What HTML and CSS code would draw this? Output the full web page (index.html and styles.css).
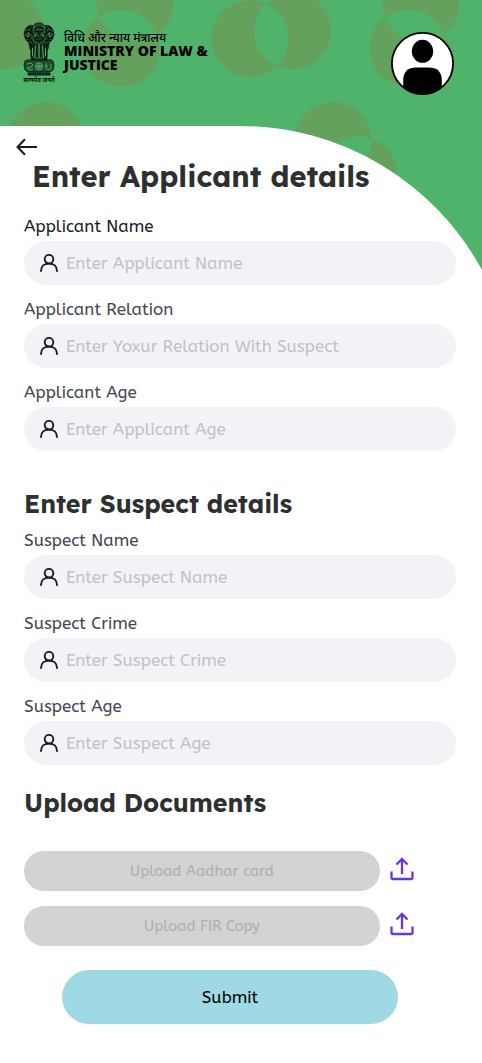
FILE: index.html
```html
<!DOCTYPE html>
<html lang="en">
<head>
<meta charset="utf-8">
<meta name="viewport" content="width=device-width, initial-scale=1">
<title>Enter Applicant details</title>
<link rel="stylesheet" href="styles.css">
</head>
<body>
<svg class="symbols" aria-hidden="true">
  <symbol id="person" viewBox="0 0 18 18"><g fill="none" stroke="currentColor" stroke-width="1.9" stroke-linecap="round"><circle cx="9" cy="5.200" r="4.300"/><path d="M1 17C1 12.200 4.300 9.600 9 9.600s8 2.600 8 7.400"/></g></symbol>
  <symbol id="upload" viewBox="0 0 24 24"><g fill="none" stroke="currentColor" stroke-width="2.300"><path d="M12 17V2M6.500 7.500L12 2l5.500 5.500M1.500 14.500v6q0 1.500 1.500 1.500h18q1.500 0 1.500-1.500v-6"/></g></symbol>
</svg>
<div class="page">
  <svg class="backdrop" viewBox="0 0 482 270" preserveAspectRatio="xMaxYMin slice" aria-hidden="true">
    <rect width="482" height="270" fill="#50b36c"/>
    <path fill="#64a15d" fill-rule="evenodd" d="
      M-33.500 31a38.500 38.500 0 1 0 77 0a38.500 38.500 0 1 0-77 0
      M96.500 3a38.500 38.500 0 1 0 77 0a38.500 38.500 0 1 0-77 0
      M82.500 48.500a38.500 38.500 0 1 0 77 0a38.500 38.500 0 1 0-77 0
      M211.500 38.500a38.500 38.500 0 1 0 77 0a38.500 38.500 0 1 0-77 0
      M254 31a38.500 38.500 0 1 0 77 0a38.500 38.500 0 1 0-77 0
      M382.500 3a38.500 38.500 0 1 0 77 0a38.500 38.500 0 1 0-77 0
      M369.500 48a38.500 38.500 0 1 0 77 0a38.500 38.500 0 1 0-77 0
      M7 140.500a38.500 38.500 0 1 0 77 0a38.500 38.500 0 1 0-77 0
      M294.500 140.500a38.500 38.500 0 1 0 77 0a38.500 38.500 0 1 0-77 0
      M320 174.500a38.500 38.500 0 1 0 77 0a38.500 38.500 0 1 0-77 0"/>
    <path fill="#fff" d="M0 126H240A275 275 0 0 1 482 270H0Z"/>
  </svg>
  <header class="header">
    <div class="brand">
      <svg class="emblem" viewBox="0 0 34 62" role="img" aria-label="State Emblem of India">
        <g fill="#0b2416" fill-opacity=".72" stroke="#06150c">
          <path stroke-width=".8" d="M12 4Q12 1 17 1t5 3q4-2 7 1l2 3 1 5-2 5-3 3-1 6-2 1 1 10H9l1-10-2-1-1-6-3-3-2-5 1-5 2-3q3-3 7-1Z"/>
          <path stroke-width=".8" d="M3 39q2-2 5-1h18q3-1 5 1l1 4-1 5-3 2H6l-3-2-1-5Z"/>
          <path stroke-width="1" d="M6 51h22v2H6z"/>
        </g>
        <g fill="none" stroke="#030a06" stroke-width="1.100">
          <path d="M11 5q-3 4 0 8l3 5q3 2 6 0l3-5q3-4 0-8M12 7q5-4 10 0M13 9l3 1M21 9l-3 1M17 9v5M14 15q3 2 6 0M15 18l2 2 2-2"/>
          <path d="M4 7l4-2 2 3M2 11l5-2 2 3M3 15l4 2 2-3M5 19l4-1 2 3M7 21l4 3M30 7l-4-2-2 3M32 11l-5-2-2 3M31 15l-4 2-2-3M29 19l-4-1-2 3M27 21l-4 3"/>
          <path d="M9 23v12M12 21v15M15 22v13M19 22v13M22 21v15M25 23v12M9 36l3 1M22 37l3-1"/>
        </g>
        <g fill="none" stroke="#50b36c" stroke-width=".9">
          <path d="M10.500 26v8M13.500 24l-1 12M17 22v14M20.500 24l1 12M23.500 26v8M11 7l2-3M23 7l-2-3M14 12l-2 3M20 12l2 3M6 11l2 1M28 11l-2 1M5 14h2M29 14h-2"/>
          <circle cx="17" cy="44.500" r="3.600"/>
          <path d="M17 41v7M13.500 44.500h7M14.500 42l5 5M19.500 42l-5 5M5 42l4-1 2 2-2 2-4 1 2 2 4-1M24 41v5l2 2 3-1v-5M23 44h3"/>
        </g>
        <text class="motto" x="17" y="60" text-anchor="middle">सत्यमेव जयते</text>
      </svg>
      <div class="brand-text">
        <span class="brand-hindi" lang="hi">विधि और न्याय मंत्रालय</span>
        <span class="brand-name">MINISTRY OF LAW &amp; JUSTICE</span>
      </div>
    </div>
    <button class="avatar" type="button" aria-label="Profile">
      <svg viewBox="0 0 62 62" aria-hidden="true"><defs><clipPath id="disc"><circle cx="31" cy="31" r="30"/></clipPath></defs><circle cx="31" cy="31" r="30.100" fill="#fff" stroke="#000" stroke-width="1.800"/><ellipse cx="31" cy="19" rx="10.500" ry="11.300"/><path clip-path="url(#disc)" d="M12 62V48Q12 35 25 35H37Q50 35 50 48V62Z"/></svg>
    </button>
  </header>
  <main class="main">
    <button class="back" type="button" aria-label="Back">
      <svg viewBox="0 0 22 18" aria-hidden="true"><path d="M21 9H1.500M9 1.200L1.500 9 9 16.800" fill="none" stroke="#1b1b1b" stroke-width="2"/></svg>
    </button>
    <form class="form">
      <h1 class="title">Enter Applicant details</h1>
      <div class="fields">
        <div class="field">
          <label class="label label-strong" for="an">Applicant Name</label>
          <div class="control"><svg class="icon" aria-hidden="true"><use href="#person"/></svg><input class="input" id="an" type="text" placeholder="Enter Applicant Name"></div>
        </div>
        <div class="field">
          <label class="label" for="ar">Applicant Relation</label>
          <div class="control"><svg class="icon" aria-hidden="true"><use href="#person"/></svg><input class="input" id="ar" type="text" placeholder="Enter Yoxur Relation With Suspect"></div>
        </div>
        <div class="field">
          <label class="label" for="aa">Applicant Age</label>
          <div class="control"><svg class="icon" aria-hidden="true"><use href="#person"/></svg><input class="input" id="aa" type="text" placeholder="Enter Applicant Age"></div>
        </div>
      </div>
      <h2 class="subtitle subtitle-suspect">Enter Suspect details</h2>
      <div class="fields">
        <div class="field">
          <label class="label" for="sn">Suspect Name</label>
          <div class="control"><svg class="icon" aria-hidden="true"><use href="#person"/></svg><input class="input" id="sn" type="text" placeholder="Enter Suspect Name"></div>
        </div>
        <div class="field">
          <label class="label" for="sc">Suspect Crime</label>
          <div class="control"><svg class="icon" aria-hidden="true"><use href="#person"/></svg><input class="input" id="sc" type="text" placeholder="Enter Suspect Crime"></div>
        </div>
        <div class="field">
          <label class="label" for="sa">Suspect Age</label>
          <div class="control"><svg class="icon" aria-hidden="true"><use href="#person"/></svg><input class="input" id="sa" type="text" placeholder="Enter Suspect Age"></div>
        </div>
      </div>
      <h2 class="subtitle subtitle-docs">Upload Documents</h2>
      <div class="uploads">
        <div class="upload">
          <button class="upload-name" type="button">Upload Aadhar card</button>
          <button class="upload-icon" type="button" aria-label="Choose Aadhar card file"><svg aria-hidden="true"><use href="#upload"/></svg></button>
        </div>
        <div class="upload">
          <button class="upload-name" type="button">Upload FIR Copy</button>
          <button class="upload-icon" type="button" aria-label="Choose FIR copy file"><svg aria-hidden="true"><use href="#upload"/></svg></button>
        </div>
      </div>
      <button class="submit" type="submit">Submit</button>
    </form>
  </main>
</div>
</body>
</html>
```
FILE: styles.css
```css
* { box-sizing: border-box; }
body {
  margin: 0;
  background: #fff;
  color: #2d3030;
  font-family: ABeeZee, "Noto Sans", sans-serif;
}
button { border: 0; padding: 0; background: none; font: inherit; cursor: pointer; }
svg { display: block; }
.symbols { position: absolute; width: 0; height: 0; }
.page { position: relative; isolation: isolate; padding-bottom: 40px; }
.backdrop { position: absolute; top: 0; left: 0; z-index: -1; width: 100%; height: 270px; }

.header {
  display: flex;
  justify-content: space-between;
  align-items: flex-start;
  height: 126px;
  padding: 22px 28px 0 22px;
}
.brand { display: flex; gap: 8px; }
.emblem { width: 34px; height: 62px; }
.motto { font: 700 6px "Noto Sans Devanagari", "Noto Sans", sans-serif; fill: #06150c; }
.brand-text { display: flex; flex-direction: column; width: 156px; padding-top: 12px; color: #000; }
.brand-hindi { font: 500 12px/10px "Noto Sans Devanagari", "Noto Sans", sans-serif; white-space: nowrap; }
.brand-name { font: 800 14px/14px "Open Sans", sans-serif; }
.avatar { width: 63px; height: 63px; margin-top: 10px; }

.main { padding: 11px 26px 0 24px; }
.back { display: flex; align-items: center; width: 22px; height: 20px; margin-left: -8px; }
.back svg { width: 22px; height: 18px; }
.form { display: flex; flex-direction: column; }
.title, .subtitle { margin: 0; font-family: Lexend, Inter, sans-serif; font-weight: 700; }
.title { margin: 0 0 20px 8px; font-size: 29px; line-height: 38px; }
.subtitle { font-size: 25px; line-height: 32px; }
.subtitle-suspect { margin: 37px 0 9px; }
.subtitle-docs { margin: 22px 0 32px; }

.fields { display: flex; flex-direction: column; gap: 13px; }
.field { display: flex; flex-direction: column; gap: 4px; }
.label { font-size: 17px; line-height: 22px; color: #424653; }
.label-strong { color: #171a1f; }
.control {
  display: flex;
  align-items: center;
  gap: 8px;
  height: 44px;
  padding: 0 16px;
  border-radius: 22px;
  background: #f2f3f6;
  color: #171a1f;
}
.icon { flex: none; width: 18px; height: 18px; }
.input {
  flex: 1;
  min-width: 0;
  padding: 0;
  border: 0;
  outline: 0;
  background: none;
  color: #171a1f;
  font: 17px/24px ABeeZee, "Noto Sans", sans-serif;
}
.input::placeholder { color: #bfc2cc; opacity: 1; }

.uploads { display: flex; flex-direction: column; gap: 15px; margin-right: 42px; }
.upload { display: flex; align-items: flex-start; gap: 10px; }
.upload-name { flex: 1; height: 40px; border-radius: 20px; background: #d4d2d3; color: #b0aeb0; font-size: 15px; }
.upload-icon { display: flex; align-items: center; width: 24px; height: 36px; color: #6936d8; }
.upload-icon svg { width: 24px; height: 24px; }
.submit { height: 54px; margin: 24px 58px 0 38px; border-radius: 27px; background: #9fd9e3; color: #000; font-size: 17px; }
```
